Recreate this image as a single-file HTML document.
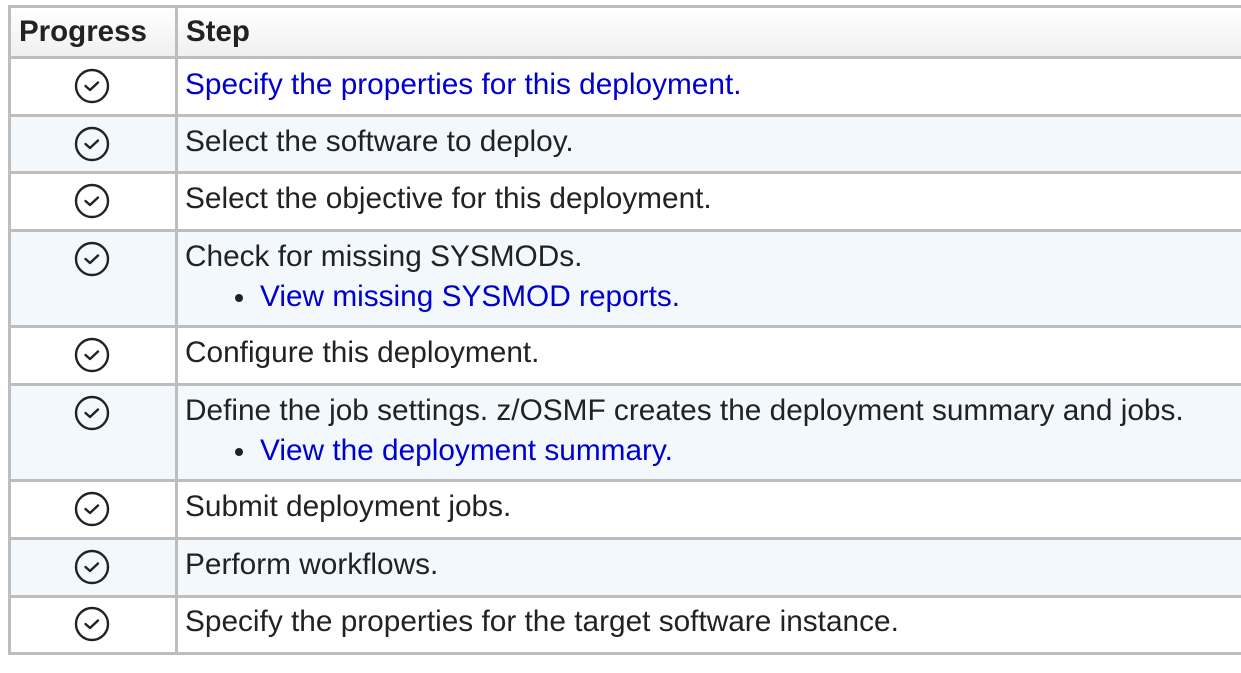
<!DOCTYPE html>
<html><head><meta charset="utf-8"><style>
body{margin:0;width:1241px;height:673px;overflow:hidden;background:#fff;font-family:"Liberation Sans",Arial,sans-serif;}
.h{position:absolute;left:8px;width:1300px;height:3px;background:#bdbdbd}
.v{position:absolute;top:6px;width:3px;height:648px;background:#bdbdbd}
.bg{position:absolute;left:11px;width:1300px}
.t{position:absolute;left:185px;font-size:29.8px;line-height:40px;color:#222;white-space:nowrap}
.a{color:#0000cc}
.li{padding-left:75px;position:relative}
.li:before{content:"";position:absolute;left:50px;top:17px;width:8px;height:8px;border-radius:50%;background:#222}
.ic{position:absolute;left:74px;width:36px;height:36px}
.hd{position:absolute;font-size:29.5px;font-weight:bold;color:#222;top:15px}
</style></head><body>
<div class="bg" style="top:8px;height:48px;background:linear-gradient(#fff,#f0f0f0)"></div>
<div class="bg" style="top:116px;height:55px;background:#f3f8fd"></div>
<div class="bg" style="top:231px;height:94px;background:#f3f8fd"></div>
<div class="bg" style="top:385px;height:94px;background:#f3f8fd"></div>
<div class="bg" style="top:539px;height:56px;background:#f3f8fd"></div>
<div class="h" style="top:5px"></div>
<div class="h" style="top:56px"></div>
<div class="h" style="top:114px"></div>
<div class="h" style="top:171px"></div>
<div class="h" style="top:229px"></div>
<div class="h" style="top:325px"></div>
<div class="h" style="top:383px"></div>
<div class="h" style="top:479px"></div>
<div class="h" style="top:537px"></div>
<div class="h" style="top:595px"></div>
<div class="h" style="top:652px"></div>
<div class="v" style="left:8px"></div>
<div class="v" style="left:175px"></div>
<div class="hd" style="left:19px">Progress</div>
<div class="hd" style="left:186px">Step</div>

<div class="t a" style="top:65px">Specify the properties for this deployment.</div>
<div class="t" style="top:122px">Select the software to deploy.</div>
<div class="t" style="top:179px">Select the objective for this deployment.</div>
<div class="t" style="top:237px">Check for missing SYSMODs.<div class="li a">View missing SYSMOD reports.</div></div>
<div class="t" style="top:333px">Configure this deployment.</div>
<div class="t" style="top:391px">Define the job settings. z/OSMF creates the deployment summary and jobs.<div class="li a">View the deployment summary.</div></div>
<div class="t" style="top:487px">Submit deployment jobs.</div>
<div class="t" style="top:545px">Perform workflows.</div>
<div class="t" style="top:602px">Specify the properties for the target software instance.</div>

<svg width="0" height="0" style="position:absolute"><defs><g id="c"><circle cx="18" cy="18" r="16" fill="none" stroke="#222" stroke-width="2.4"/><path d="M11.5 18 L16 22 L24 14.5" fill="none" stroke="#222" stroke-width="2.4" stroke-linecap="round" stroke-linejoin="round"/></g></defs></svg>
<svg class="ic" style="top:68px"><use href="#c"/></svg>
<svg class="ic" style="top:126px"><use href="#c"/></svg>
<svg class="ic" style="top:183px"><use href="#c"/></svg>
<svg class="ic" style="top:241px"><use href="#c"/></svg>
<svg class="ic" style="top:337px"><use href="#c"/></svg>
<svg class="ic" style="top:395px"><use href="#c"/></svg>
<svg class="ic" style="top:491px"><use href="#c"/></svg>
<svg class="ic" style="top:549px"><use href="#c"/></svg>
<svg class="ic" style="top:606px"><use href="#c"/></svg>
</body></html>
